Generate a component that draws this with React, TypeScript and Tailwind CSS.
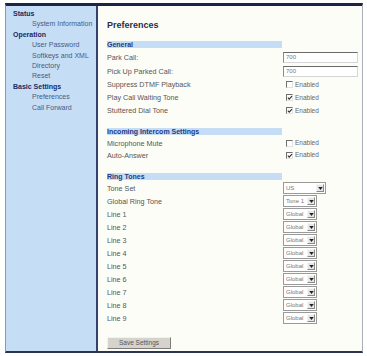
import React from "react";

const navItems: { t: string; h?: boolean }[] = [
  { t: "Status", h: true },
  { t: "System Information" },
  { t: "Operation", h: true },
  { t: "User Password" },
  { t: "Softkeys and XML" },
  { t: "Directory" },
  { t: "Reset" },
  { t: "Basic Settings", h: true },
  { t: "Preferences" },
  { t: "Call Forward" },
];

function SectionBar({ title }: { title: string }) {
  return (
    <div className="w-[175px] h-[7px] bg-[#c6ddf6] text-[7px] leading-[7px] font-bold text-[#1d3a80] whitespace-nowrap">
      {title}
    </div>
  );
}

function Row({ label, h, children }: { label: string; h: string; children?: React.ReactNode }) {
  return (
    <div className={`flex items-center ${h}`}>
      <div className="w-[176px] text-[7.2px] leading-[9px] text-[#555] whitespace-nowrap">{label}</div>
      {children}
    </div>
  );
}

function TextInput({ value }: { value: string }) {
  return (
    <div className="w-[75px] h-[11px] bg-white border-t-[1.5px] border-l border-b border-r border-t-[#6b6b6b] border-l-[#8a8a8a] border-b-[#d6d6d6] border-r-[#d6d6d6] flex items-center pl-[2px] text-[6px] leading-[6px] text-[#777]">
      {value}
    </div>
  );
}

function Check({ checked }: { checked: boolean }) {
  return (
    <div className="flex items-center ml-[3px]">
      <div className="relative w-[7px] h-[7px] bg-white border-t border-l border-b border-r border-t-[#6f6f6f] border-l-[#6f6f6f] border-b-[#e2e2e2] border-r-[#e2e2e2]">
        {checked && (
          <svg viewBox="0 0 7 7" className="absolute left-0 top-0 w-[6px] h-[6px]">
            <path d="M1 3.2 L2.6 4.9 L5.8 1.2" stroke="#333" strokeWidth="1.3" fill="none" />
          </svg>
        )}
      </div>
      <span className="ml-[2px] text-[6.5px] leading-[8px] text-[#666]">Enabled</span>
    </div>
  );
}

function Select({ value, w }: { value: string; w: string }) {
  return (
    <div className={`${w} h-[12px] bg-white border border-[#9a9a9a] flex items-center justify-between pl-[2px] pr-[1px]`}>
      <span className="text-[6px] leading-[6px] text-[#777]">{value}</span>
      <div className="w-[8px] h-[8px] bg-[#e6e6e6] border border-t-[#f6f6f6] border-l-[#f6f6f6] border-b-[#8a8a8a] border-r-[#8a8a8a] flex items-center justify-center">
        <svg viewBox="0 0 6 4" className="w-[5px] h-[3px]">
          <path d="M0 0 L6 0 L3 4 Z" fill="#222" />
        </svg>
      </div>
    </div>
  );
}

export default function App() {
  const lines = ["Line 1", "Line 2", "Line 3", "Line 4", "Line 5", "Line 6", "Line 7", "Line 8", "Line 9"];
  return (
    <div className="w-[367px] h-[356px] bg-white pt-[3px] pl-[5px] pr-[4px] [font-family:'Liberation_Sans',Arial,sans-serif]">
      <div className="flex h-[350px] border-t-[3px] border-t-[#1c2644] border-l border-l-[#8d98b0] border-r border-r-[#a9aeb8] border-b-[2px] border-b-[#2a3350]">
        {/* Sidebar */}
        <div className="w-[92px] shrink-0 bg-[#c6ddf6] border-r-[2px] border-r-[#34426c] pt-[3px]">
          {navItems.map((n) => (
            <div
              key={n.t}
              className={
                n.h
                  ? "h-[10.4px] leading-[10.4px] text-[7px] font-bold text-[#1a2b5f] pl-[7px] whitespace-nowrap"
                  : "h-[10.4px] leading-[10.4px] text-[7px] text-[#4a5a80] pl-[26px] whitespace-nowrap"
              }
            >
              {n.t}
            </div>
          ))}
        </div>
        {/* Content */}
        <div className="flex-1 bg-[#fdfdf8] pl-[9px] flex flex-col">
          <div className="mt-[14px] h-[11px] leading-[11px] text-[9px] font-bold text-[#2a2f45]">Preferences</div>

          <div className="mt-[10px]">
            <SectionBar title="General" />
          </div>
          <div className="mt-[2px]">
            <Row label="Park Call:" h="h-[14px]">
              <TextInput value="700" />
            </Row>
            <Row label="Pick Up Parked Call:" h="h-[14px]">
              <TextInput value="700" />
            </Row>
            <Row label="Suppress DTMF Playback" h="h-[13px]">
              <Check checked={false} />
            </Row>
            <Row label="Play Call Waiting Tone" h="h-[13px]">
              <Check checked={true} />
            </Row>
            <Row label="Stuttered Dial Tone" h="h-[13px]">
              <Check checked={true} />
            </Row>
          </div>

          <div className="mt-[11px]">
            <SectionBar title="Incoming Intercom Settings" />
          </div>
          <div className="mt-[2px]">
            <Row label="Microphone Mute" h="h-[12px]">
              <Check checked={false} />
            </Row>
            <Row label="Auto-Answer" h="h-[12px]">
              <Check checked={true} />
            </Row>
          </div>

          <div className="mt-[12px]">
            <SectionBar title="Ring Tones" />
          </div>
          <div className="mt-[1.5px]">
            <Row label="Tone Set" h="h-[13px]">
              <Select value="US" w="w-[43px]" />
            </Row>
            <Row label="Global Ring Tone" h="h-[13px]">
              <Select value="Tone 1" w="w-[34px]" />
            </Row>
            {lines.map((l) => (
              <Row key={l} label={l} h="h-[13px]">
                <Select value="Global" w="w-[34px]" />
              </Row>
            ))}
          </div>

          <div className="mt-[12.5px]">
            <button className="w-[64px] h-[12px] bg-[#d6d3cc] border border-t-[#f2f2f2] border-l-[#f2f2f2] border-b-[#7d7d7d] border-r-[#7d7d7d] text-[6.5px] leading-[6.5px] text-[#555] flex items-center justify-center">
              Save Settings
            </button>
          </div>
        </div>
      </div>
    </div>
  );
}
